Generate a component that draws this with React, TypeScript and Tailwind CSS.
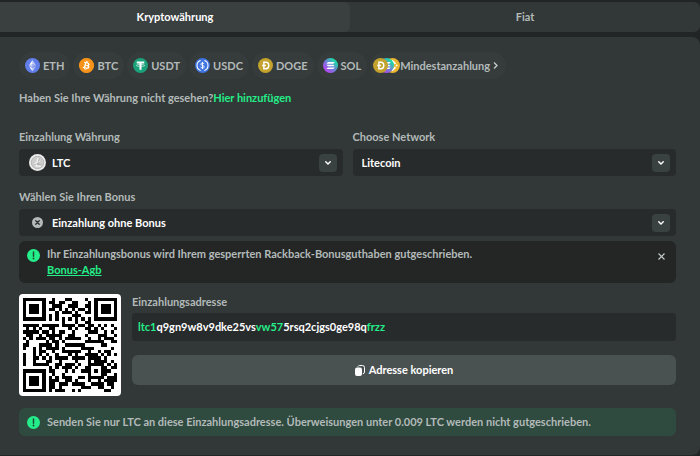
import React, { useId, useMemo, useState } from "react";
import type { ReactNode } from "react";
import { FaBitcoin } from "react-icons/fa";

/* ---------- QR code: version 3, level L, byte mode ---------- */

const SIZE = 29;
const DATA_WORDS = 55;
const EC_WORDS = 15;

function gfMul(a: number, b: number): number {
  let r = 0;
  for (let i = 7; i >= 0; i--) {
    r = (r << 1) ^ ((r >>> 7) * 0x11d);
    r ^= ((b >>> i) & 1) * a;
  }
  return r & 255;
}

function errorWords(data: number[]): number[] {
  const gen: number[] = new Array(EC_WORDS).fill(0);
  gen[EC_WORDS - 1] = 1;
  let root = 1;
  for (let i = 0; i < EC_WORDS; i++) {
    for (let j = 0; j < EC_WORDS; j++) {
      gen[j] = gfMul(gen[j], root);
      if (j + 1 < EC_WORDS) gen[j] ^= gen[j + 1];
    }
    root = gfMul(root, 2);
  }
  const rem: number[] = new Array(EC_WORDS).fill(0);
  for (const b of data) {
    const f = b ^ (rem.shift() as number);
    rem.push(0);
    gen.forEach((g, i) => (rem[i] ^= gfMul(g, f)));
  }
  return rem;
}

const MASKS: ((x: number, y: number) => boolean)[] = [
  (x, y) => (x + y) % 2 === 0,
  (_x, y) => y % 2 === 0,
  (x) => x % 3 === 0,
  (x, y) => (x + y) % 3 === 0,
  (x, y) => (Math.floor(x / 3) + Math.floor(y / 2)) % 2 === 0,
  (x, y) => ((x * y) % 2) + ((x * y) % 3) === 0,
  (x, y) => (((x * y) % 2) + ((x * y) % 3)) % 2 === 0,
  (x, y) => (((x + y) % 2) + ((x * y) % 3)) % 2 === 0,
];

function penalty(m: boolean[][]): number {
  let score = 0;
  let dark = 0;
  const line = (get: (i: number) => boolean) => {
    let run = 1;
    for (let i = 1; i <= SIZE; i++) {
      if (i < SIZE && get(i) === get(i - 1)) run++;
      else {
        if (run >= 5) score += run - 2;
        run = 1;
      }
    }
    let s = "";
    for (let i = 0; i < SIZE; i++) s += get(i) ? "1" : "0";
    for (let i = 0; i + 11 <= SIZE; i++) {
      const p = s.slice(i, i + 11);
      if (p === "10111010000" || p === "00001011101") score += 40;
    }
  };
  for (let k = 0; k < SIZE; k++) {
    line((i) => m[k][i]);
    line((i) => m[i][k]);
  }
  for (let y = 0; y < SIZE; y++)
    for (let x = 0; x < SIZE; x++) {
      if (m[y][x]) dark++;
      if (x && y && m[y][x] === m[y][x - 1] && m[y][x] === m[y - 1][x] && m[y][x] === m[y - 1][x - 1]) score += 3;
    }
  score += Math.floor(Math.abs((dark * 100) / (SIZE * SIZE) - 50) / 5) * 10;
  return score;
}

function buildQr(text: string): boolean[][] {
  const bits: number[] = [];
  const push = (v: number, n: number) => {
    for (let i = n - 1; i >= 0; i--) bits.push((v >>> i) & 1);
  };
  push(4, 4);
  push(text.length, 8);
  for (const c of text) push(c.charCodeAt(0), 8);
  push(0, 4);
  while (bits.length % 8) bits.push(0);
  for (let pad = 0xec; bits.length < DATA_WORDS * 8; pad ^= 0xec ^ 0x11) push(pad, 8);
  const data: number[] = [];
  for (let i = 0; i < bits.length; i += 8) data.push(parseInt(bits.slice(i, i + 8).join(""), 2));
  const words = data.concat(errorWords(data));

  const m = Array.from({ length: SIZE }, () => new Array<boolean>(SIZE).fill(false));
  const fixed = Array.from({ length: SIZE }, () => new Array<boolean>(SIZE).fill(false));
  const set = (grid: boolean[][], x: number, y: number, v: boolean) => {
    grid[y][x] = v;
    fixed[y][x] = true;
  };
  for (let i = 0; i < SIZE; i++) {
    set(m, 6, i, i % 2 === 0);
    set(m, i, 6, i % 2 === 0);
  }
  const rings = (cx: number, cy: number, r: number, light: number[]) => {
    for (let dy = -r; dy <= r; dy++)
      for (let dx = -r; dx <= r; dx++) {
        const x = cx + dx;
        const y = cy + dy;
        if (x < 0 || y < 0 || x >= SIZE || y >= SIZE) continue;
        set(m, x, y, !light.includes(Math.max(Math.abs(dx), Math.abs(dy))));
      }
  };
  rings(3, 3, 4, [2, 4]);
  rings(SIZE - 4, 3, 4, [2, 4]);
  rings(3, SIZE - 4, 4, [2, 4]);
  rings(22, 22, 2, [1]);

  const drawFormat = (grid: boolean[][], mask: number) => {
    const d = (1 << 3) | mask;
    let rem = d;
    for (let i = 0; i < 10; i++) rem = (rem << 1) ^ ((rem >>> 9) * 0x537);
    const f = ((d << 10) | rem) ^ 0x5412;
    const bit = (i: number) => ((f >>> i) & 1) === 1;
    for (let i = 0; i <= 5; i++) set(grid, 8, i, bit(i));
    set(grid, 8, 7, bit(6));
    set(grid, 8, 8, bit(7));
    set(grid, 7, 8, bit(8));
    for (let i = 9; i < 15; i++) set(grid, 14 - i, 8, bit(i));
    for (let i = 0; i < 8; i++) set(grid, SIZE - 1 - i, 8, bit(i));
    for (let i = 8; i < 15; i++) set(grid, 8, SIZE - 15 + i, bit(i));
    set(grid, 8, SIZE - 8, true);
  };
  drawFormat(m, 0);

  let n = 0;
  for (let right = SIZE - 1; right >= 1; right -= 2) {
    if (right === 6) right = 5;
    for (let v = 0; v < SIZE; v++)
      for (let j = 0; j < 2; j++) {
        const x = right - j;
        const y = ((right + 1) & 2) === 0 ? SIZE - 1 - v : v;
        if (!fixed[y][x] && n < words.length * 8) {
          m[y][x] = ((words[n >>> 3] >>> (7 - (n & 7))) & 1) === 1;
          n++;
        }
      }
  }

  let best = m;
  let low = Infinity;
  MASKS.forEach((fn, k) => {
    const g = m.map((row, y) => row.map((v, x) => (fixed[y][x] ? v : v !== fn(x, y))));
    drawFormat(g, k);
    const p = penalty(g);
    if (p < low) {
      low = p;
      best = g;
    }
  });
  return best;
}

function QrCode({ value }: { value: string }) {
  const path = useMemo(
    () =>
      buildQr(value)
        .map((row, y) => row.map((v, x) => (v ? `M${x} ${y}h1v1h-1z` : "")).join(""))
        .join(""),
    [value],
  );
  return (
    <svg viewBox="0 0 29 29" className="size-full" shapeRendering="crispEdges" role="img" aria-label="QR">
      <path d={path} fill="#000" />
    </svg>
  );
}

/* ---------- Coin icons ---------- */

const coin = "size-[15px] shrink-0";

const Eth = () => (
  <svg viewBox="0 0 32 32" className={coin}>
    <circle cx="16" cy="16" r="16" fill="#627eea" />
    <path d="M16 4v8.9l7.5 3.3z" fill="#fff" fillOpacity=".6" />
    <path d="M16 4 8.500 16.200 16 12.900z" fill="#fff" />
    <path d="M16 22v6l7.500-10.400z" fill="#fff" fillOpacity=".6" />
    <path d="M16 28v-6l-7.500-4.400z" fill="#fff" />
    <path d="m16 20.600 7.500-4.400L16 12.900z" fill="#fff" fillOpacity=".3" />
    <path d="m8.500 16.200 7.500 4.400v-7.700z" fill="#fff" fillOpacity=".6" />
  </svg>
);

const Btc = () => (
  <span className="flex size-[15px] shrink-0 items-center justify-center rounded-full bg-[radial-gradient(circle,#fff_50%,#f7931a_52%)]">
    <FaBitcoin className="size-[15px] text-[#f7931a]" />
  </span>
);

const Usdt = () => (
  <svg viewBox="0 0 32 32" className={coin}>
    <circle cx="16" cy="16" r="16" fill="#1ba27a" />
    <path d="M8 7.500h16v4h-5.800V25h-4.400V11.500H8z" fill="#fff" />
    <ellipse cx="16" cy="15.800" rx="9" ry="2" fill="none" stroke="#fff" strokeWidth="1.200" />
  </svg>
);

const Usdc = () => (
  <svg viewBox="0 0 32 32" className={coin}>
    <circle cx="16" cy="16" r="16" fill="#3e73e0" />
    <path
      d="M12 5.500a11 11 0 0 0 0 21M20 5.500a11 11 0 0 1 0 21"
      fill="none"
      stroke="#fff"
      strokeWidth="2.200"
    />
    <path
      d="M19.500 13c-.4-1.600-1.700-2.300-3.500-2.300-2.100 0-3.500 1-3.500 2.600 0 3.700 7.200 1.700 7.200 5.500 0 1.700-1.500 2.700-3.700 2.700s-3.600-1-3.900-2.700M16 8.300v15.400"
      fill="none"
      stroke="#fff"
      strokeWidth="1.900"
    />
  </svg>
);

const Doge = () => (
  <svg viewBox="0 0 32 32" className={coin}>
    <circle cx="16" cy="16" r="16" fill="#c3a22d" />
    <path
      d="M12.500 9.200h4.300c4 0 6.200 2.700 6.200 6.800s-2.200 6.800-6.200 6.800h-4.300zM9 16h8"
      fill="none"
      stroke="#fff"
      strokeWidth="3"
    />
  </svg>
);

const Sol = () => {
  const id = useId();
  return (
    <svg viewBox="0 0 32 32" className={coin}>
      <defs>
        <linearGradient id={id} x1="4" y1="28" x2="28" y2="4" gradientUnits="userSpaceOnUse">
          <stop offset=".1" stopColor="#b04bf0" />
          <stop offset=".5" stopColor="#6d80d8" />
          <stop offset=".9" stopColor="#1fd8a8" />
        </linearGradient>
      </defs>
      <circle cx="16" cy="16" r="16" fill={`url(#${id})`} />
      <path d="M10.500 8.500H25L22 12H7.500zM7.500 14.300H22l3 3.500H10.500zM10.500 20H25l-3 3.500H7.500z" fill="#fff" />
    </svg>
  );
};

const Bnb = () => (
  <svg viewBox="0 0 32 32" className={coin}>
    <circle cx="16" cy="16" r="16" fill="#ebb52f" />
    <path d="m9.500 12.500 6.500-6.500 6.500 6.500M9.500 19.500l6.500 6.500 6.500-6.500" fill="none" stroke="#fff" strokeWidth="3.400" />
    <path d="m16 12.500 3.500 3.500-3.500 3.500-3.500-3.500zM25 13.500l2.500 2.500-2.500 2.500-2.500-2.500z" fill="#fff" />
  </svg>
);

const Ltc = () => (
  <svg viewBox="0 0 34 34" className="size-[17px]">
    <circle cx="17" cy="17" r="17" fill="#ececec" />
    <circle cx="17" cy="17" r="12.500" fill="#cdcdcd" stroke="#a9a9a9" strokeWidth="1.500" />
    <path d="M18.500 8 14.500 24H24M11.500 19.500l10-4.500" fill="none" stroke="#f4f4f4" strokeWidth="3.200" />
    <path d="M20.500 8 17 21.500h8M12 21.500l10-4.500" fill="none" stroke="#8e8e8e" strokeWidth="1" />
  </svg>
);

/* ---------- Small glyphs ---------- */

const Info = () => (
  <svg viewBox="0 0 26 26" className="size-[13px] shrink-0" aria-hidden="true">
    <circle cx="13" cy="13" r="13" fill="#24ee89" />
    <path d="M13 6v8.500" stroke="#1c4a34" strokeWidth="3" strokeLinecap="round" />
    <circle cx="13" cy="19" r="1.900" fill="#1c4a34" />
  </svg>
);

const NoBonus = () => (
  <svg viewBox="0 0 22 22" className="size-[11px]">
    <circle cx="11" cy="11" r="11" fill="#b3b9b9" />
    <path d="m7.500 7.500 7 7m0-7-7 7" stroke="#282b2b" strokeWidth="2.600" strokeLinecap="round" />
  </svg>
);

const Copy = () => (
  <svg viewBox="0 0 20 22" className="h-[11px] w-[10px]" aria-hidden="true">
    <rect x="0" y="5" width="14" height="17" rx="4" fill="#fff" />
    <path d="M6 2.600Q7 1 9 1h6q4 0 4 4v9q0 3-2.500 3.500" fill="none" stroke="#fff" strokeWidth="2" strokeLinecap="round" />
  </svg>
);

/* ---------- Form parts ---------- */

function SelectField({ label, options, icon }: { label: string; options: string[]; icon?: ReactNode }) {
  const id = useId();
  return (
    <div className="min-w-0 flex-1">
      <label htmlFor={id} className="block leading-[14px]">
        {label}
      </label>
      <div className="relative mt-[5px]">
        {icon && (
          <span className="pointer-events-none absolute inset-y-0 left-[9px] flex w-[18px] items-center justify-center">
            {icon}
          </span>
        )}
        <select
          id={id}
          className={`block h-[27px] w-full appearance-none rounded bg-[#282b2b] pr-9 font-bold text-white ${icon ? "pl-[33px]" : "pl-[9px]"}`}
        >
          {options.map((o) => (
            <option key={o}>{o}</option>
          ))}
        </select>
        <span className="pointer-events-none absolute inset-y-0 right-[6px] flex items-center">
          <span className="flex size-[18px] items-center justify-center rounded bg-[#3a4141]">
            <svg viewBox="0 0 12 8" className="h-[4px] w-[6px]" aria-hidden="true">
              <path d="m1.500 1.500 4.500 4.500 4.500-4.500" fill="none" stroke="#fff" strokeWidth="2.800" strokeLinecap="round" />
            </svg>
          </span>
        </span>
      </div>
    </div>
  );
}

const COINS: { name: string; icon: ReactNode }[] = [
  { name: "ETH", icon: <Eth /> },
  { name: "BTC", icon: <Btc /> },
  { name: "USDT", icon: <Usdt /> },
  { name: "USDC", icon: <Usdc /> },
  { name: "DOGE", icon: <Doge /> },
  { name: "SOL", icon: <Sol /> },
];

const ADDRESS: { text: string; accent: boolean }[] = [
  { text: "ltc1", accent: true },
  { text: "q9gn9w8v9dke25vs", accent: false },
  { text: "vw57", accent: true },
  { text: "5rsq2cjgs0ge98q", accent: false },
  { text: "frzz", accent: true },
];

export default function App() {
  const [tab, setTab] = useState(0);
  return (
    <main className="min-h-screen bg-[#222525] pt-0.5 pb-px font-['Lato','Liberation_Sans',sans-serif] text-[11px] leading-4 font-bold text-[#b3bab9]">
      <div role="tablist" className="flex overflow-hidden rounded-r-md bg-[#313837]">
        {["Kryptowährung", "Fiat"].map((t, i) => (
          <button
            key={t}
            type="button"
            role="tab"
            aria-selected={tab === i}
            onClick={() => setTab(i)}
            className={`h-[30px] flex-1 rounded-r-md ${tab === i ? "bg-[#3a4040] text-white" : ""}`}
          >
            {t}
          </button>
        ))}
      </div>

      <section className="mt-[5px] rounded-r-lg bg-[#313837] pt-[15px] pr-6 pb-[19px] pl-[19px]">
        <div className="flex gap-[3px]">
          {COINS.map((c) => (
            <button
              key={c.name}
              type="button"
              className="flex h-[27px] items-center gap-[3px] rounded-full bg-[#363c3c] px-[6px]"
            >
              {c.icon}
              {c.name}
            </button>
          ))}
          <button type="button" className="flex h-[27px] items-center rounded-full bg-[#363c3c] pr-2 pl-[3px]">
            <span className="flex shrink-0">
              <span className="z-20 size-[15px]">
                <Doge />
              </span>
              <span className="z-10 -ml-[9px] size-[15px]">
                <Sol />
              </span>
              <span className="-ml-[9px] size-[15px]">
                <Bnb />
              </span>
            </span>
            Mindestanzahlung
            <svg viewBox="0 0 8 12" className="ml-[3px] h-[7px] w-[5px]" aria-hidden="true">
              <path d="m1.500 1 5 5-5 5" fill="none" stroke="#c3c9c8" strokeWidth="2.400" />
            </svg>
          </button>
        </div>

        <p className="mt-[11px]">
          Haben Sie Ihre Währung nicht gesehen?
          <a href="#add" className="text-[#24ee89]">
            Hier hinzufügen
          </a>
        </p>

        <div className="mt-6 flex gap-[10px]">
          <SelectField label="Einzahlung Währung" options={["LTC"]} icon={<Ltc />} />
          <SelectField label="Choose Network" options={["Litecoin"]} />
        </div>
        <div className="mt-[14px]">
          <SelectField label="Wählen Sie Ihren Bonus" options={["Einzahlung ohne Bonus"]} icon={<NoBonus />} />
        </div>

        <div className="mt-[5px] flex items-start gap-[7px] rounded-md bg-[#232625] px-2 py-[5px]">
          <span className="pt-[3px]">
            <Info />
          </span>
          <div className="flex-1">
            <p>Ihr Einzahlungsbonus wird Ihrem gesperrten Rackback-Bonusguthaben gutgeschrieben.</p>
            <a href="#terms" className="text-[#24ee89] underline">
              Bonus-Agb
            </a>
          </div>
          <button type="button" aria-label="Schließen" className="flex h-5 w-[14px] items-center justify-center">
            <svg viewBox="0 0 14 14" className="size-[7px]">
              <path d="m1 1 12 12M13 1 1 13" stroke="#c3c9c8" strokeWidth="2.400" />
            </svg>
          </button>
        </div>

        <div className="mt-[11px] flex gap-[11px]">
          <div className="size-[102px] shrink-0 rounded bg-white p-1">
            <QrCode value={ADDRESS.map((a) => a.text).join("")} />
          </div>
          <div className="min-w-0 flex-1">
            <p>Einzahlungsadresse</p>
            <p className="mt-[3px] rounded bg-[#282b2b] px-[6px] py-[6px] text-white">
              {ADDRESS.map((a) => (
                <span key={a.text} className={a.accent ? "text-[#24ee89]" : ""}>
                  {a.text}
                </span>
              ))}
            </p>
            <button
              type="button"
              className="mt-[14px] flex h-[30px] w-full items-center justify-center gap-1 rounded-md bg-[#4a5251] text-white"
            >
              <Copy />
              Adresse kopieren
            </button>
          </div>
        </div>

        <div className="mt-3 flex items-center gap-[7px] rounded-md bg-[#2f4a3f] px-2 py-[6px]">
          <Info />
          <p>Senden Sie nur LTC an diese Einzahlungsadresse. Überweisungen unter 0.009 LTC werden nicht gutgeschrieben.</p>
        </div>
      </section>
    </main>
  );
}
